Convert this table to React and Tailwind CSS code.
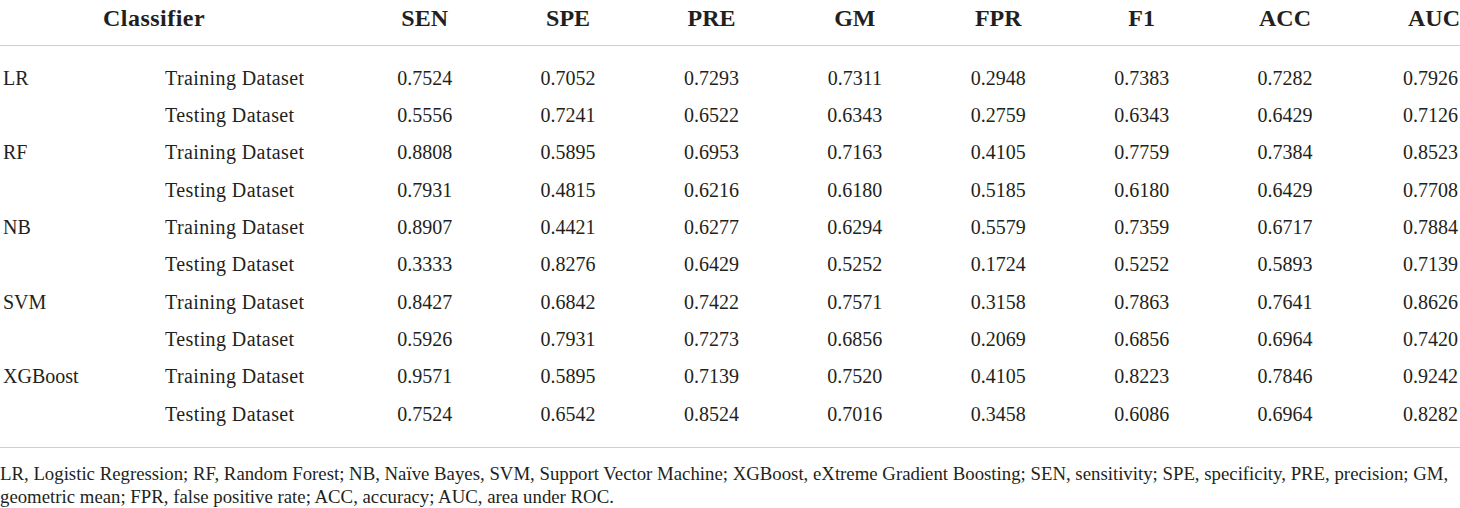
import React from "react";

const rows = [
  ["LR", "Training Dataset", "0.7524", "0.7052", "0.7293", "0.7311", "0.2948", "0.7383", "0.7282", "0.7926"],
  ["", "Testing Dataset", "0.5556", "0.7241", "0.6522", "0.6343", "0.2759", "0.6343", "0.6429", "0.7126"],
  ["RF", "Training Dataset", "0.8808", "0.5895", "0.6953", "0.7163", "0.4105", "0.7759", "0.7384", "0.8523"],
  ["", "Testing Dataset", "0.7931", "0.4815", "0.6216", "0.6180", "0.5185", "0.6180", "0.6429", "0.7708"],
  ["NB", "Training Dataset", "0.8907", "0.4421", "0.6277", "0.6294", "0.5579", "0.7359", "0.6717", "0.7884"],
  ["", "Testing Dataset", "0.3333", "0.8276", "0.6429", "0.5252", "0.1724", "0.5252", "0.5893", "0.7139"],
  ["SVM", "Training Dataset", "0.8427", "0.6842", "0.7422", "0.7571", "0.3158", "0.7863", "0.7641", "0.8626"],
  ["", "Testing Dataset", "0.5926", "0.7931", "0.7273", "0.6856", "0.2069", "0.6856", "0.6964", "0.7420"],
  ["XGBoost", "Training Dataset", "0.9571", "0.5895", "0.7139", "0.7520", "0.4105", "0.8223", "0.7846", "0.9242"],
  ["", "Testing Dataset", "0.7524", "0.6542", "0.8524", "0.7016", "0.3458", "0.6086", "0.6964", "0.8282"],
];

const metrics = ["SEN", "SPE", "PRE", "GM", "FPR", "F1", "ACC", "AUC"];

const gridCols = "grid grid-cols-[165px_188px_repeat(7,143.4px)_1fr]";

export default function App() {
  return (
    <div className="w-[1460px] h-[508px] bg-white text-[#231f20] overflow-hidden font-['Liberation_Serif',serif]">
      {/* Header */}
      <div className={`${gridCols} h-[46px] items-center border-b border-[#cfcfcf] pb-[12px]`}>
        <div className="col-span-2 pl-[103px] text-[24px] font-bold tracking-[0.02em]">Classifier</div>
        {metrics.map((m, i) => (
          <div
            key={m}
            className={`text-[24px] font-bold ${i === metrics.length - 1 ? "text-right pr-0" : "text-center"}`}
          >
            {m}
          </div>
        ))}
      </div>

      {/* Body */}
      <div className="pt-[13px] pb-[15px] border-b border-[#cfcfcf]">
        {rows.map((r, idx) => (
          <div key={idx} className={`${gridCols} h-[37.33px] items-center text-[20px]`}>
            <div className="pl-[3px]">{r[0]}</div>
            <div className="tracking-[0.02em]">{r[1]}</div>
            {r.slice(2).map((v, i) => (
              <div key={i} className={i === 7 ? "text-right pr-[2px]" : "text-center"}>
                {v}
              </div>
            ))}
          </div>
        ))}
      </div>

      {/* Footnote */}
      <p className="pt-[14px] text-[18.8px] leading-[23px]">
        LR, Logistic Regression; RF, Random Forest; NB, Naïve Bayes, SVM, Support Vector Machine; XGBoost, eXtreme
        Gradient Boosting; SEN, sensitivity; SPE, specificity, PRE, precision; GM, geometric mean; FPR, false positive
        rate; ACC, accuracy; AUC, area under ROC.
      </p>
    </div>
  );
}
